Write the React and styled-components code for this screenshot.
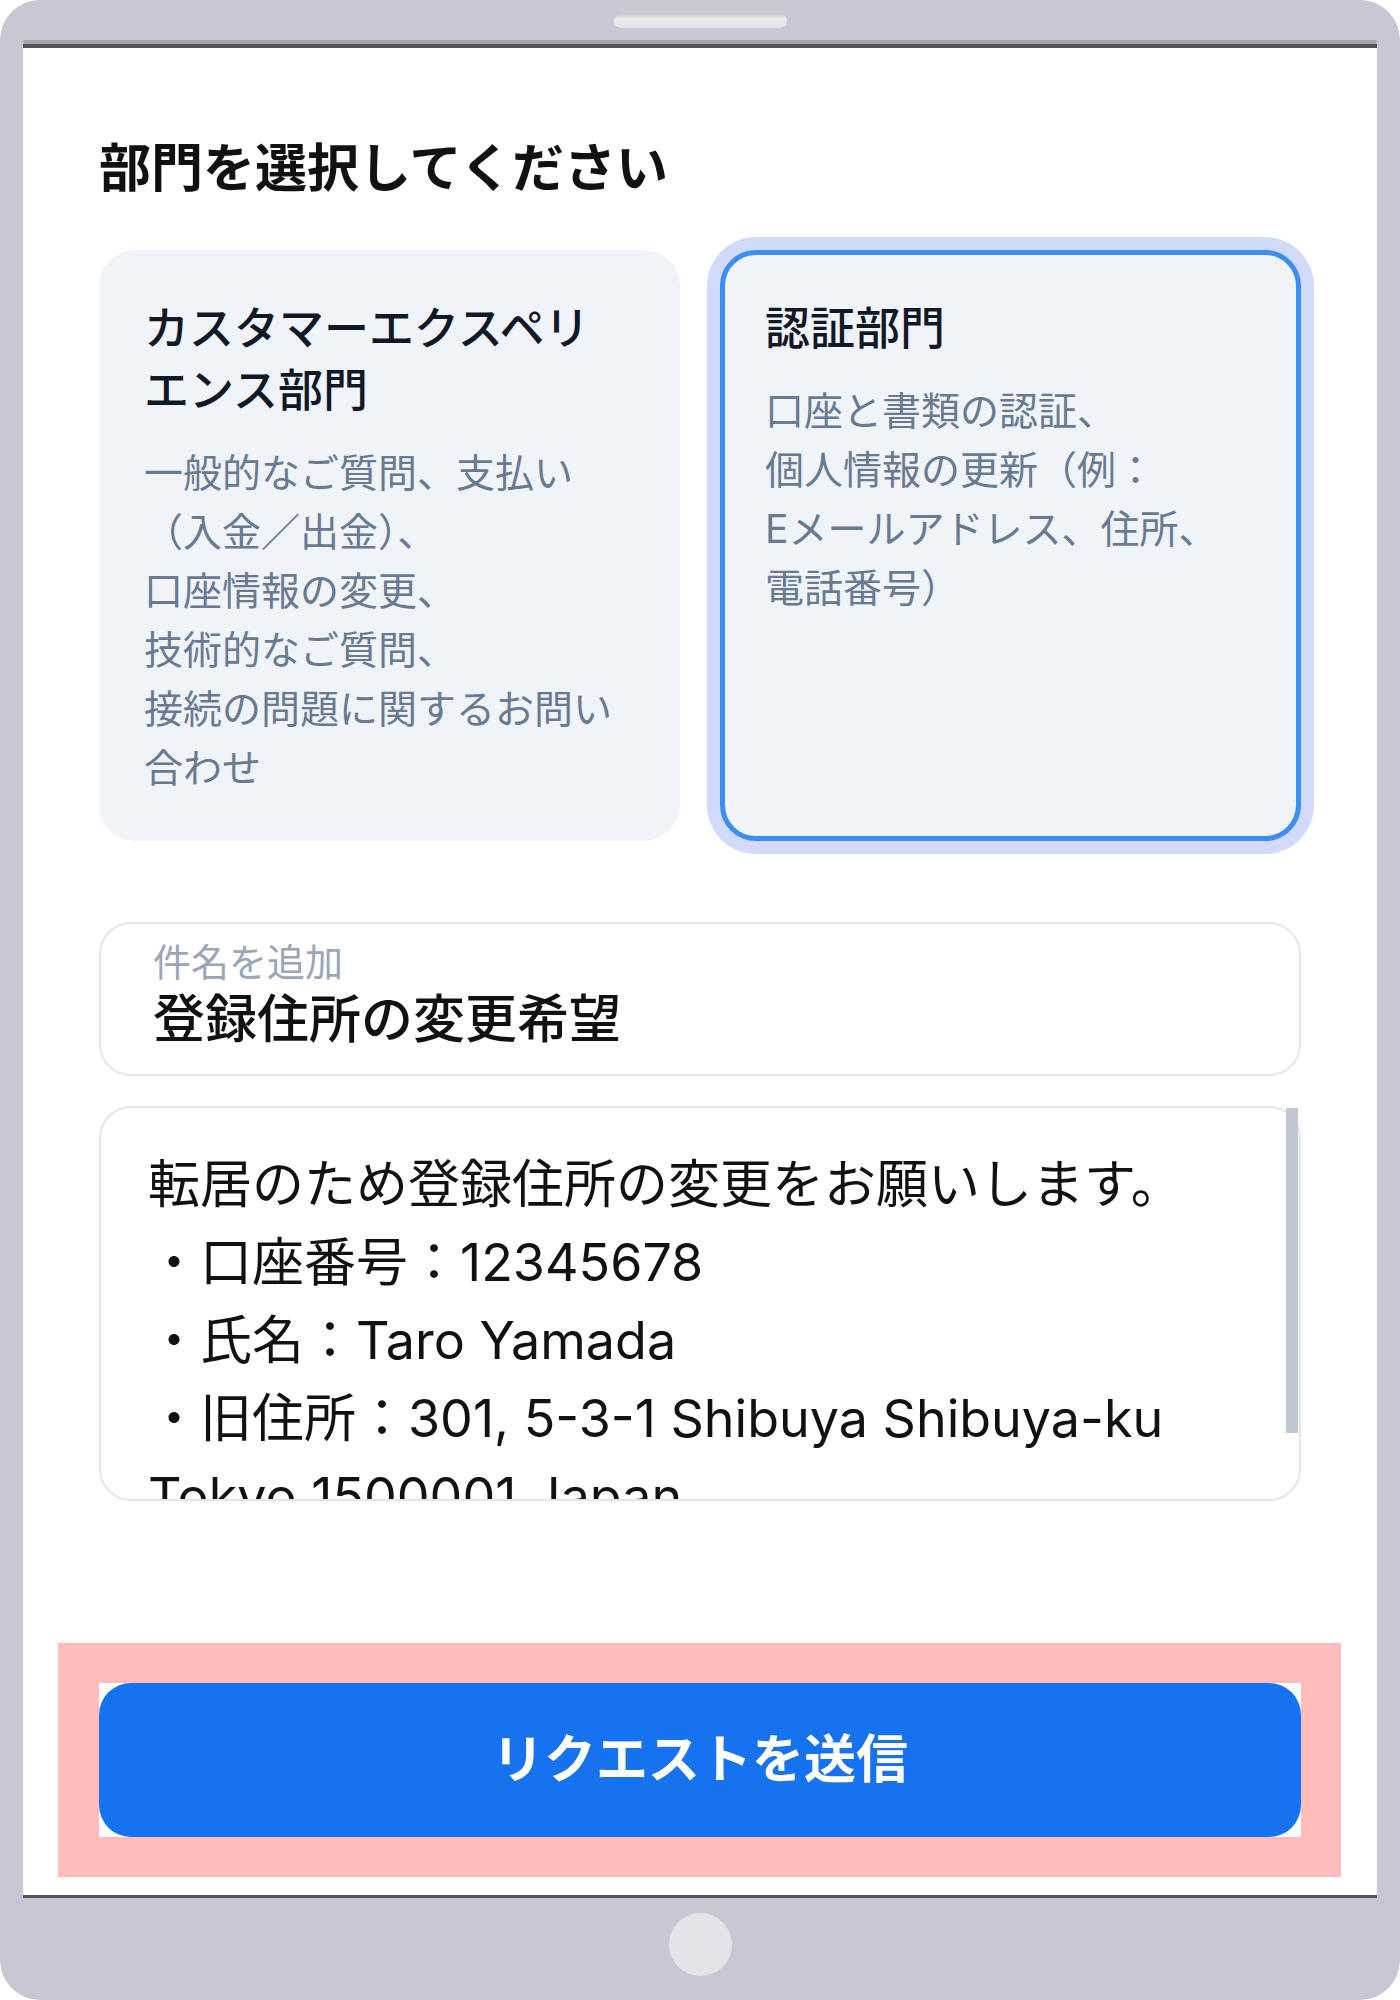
import React from 'react';
import styled, { createGlobalStyle } from 'styled-components';

const GlobalStyle = createGlobalStyle`
  * { box-sizing: border-box; }
  html, body { margin: 0; padding: 0; background: #ffffff; }
  body {
    font-family: 'Inter', 'Noto Sans CJK JP', sans-serif;
    -webkit-font-smoothing: antialiased;
  }
`;

const message = `転居のため登録住所の変更をお願いします。
・口座番号：12345678
・氏名：Taro Yamada
・旧住所：301, 5-3-1 Shibuya Shibuya-ku
Tokyo 1500001 Japan`;

const App = () => {
  return (
    <>
      <GlobalStyle />
      <Frame>
        <TopBezel>
          <Speaker />
        </TopBezel>
        <Screen>
          <Heading>部門を選択してください</Heading>
          <CardGrid>
            <Card>
              <CardTitle>カスタマーエクスペリエンス部門</CardTitle>
              <CardText>
                一般的なご質問、支払い（入金／出金）、<br />
                口座情報の変更、<br />
                技術的なご質問、<br />
                接続の問題に関するお問い合わせ
              </CardText>
            </Card>
            <Card $selected>
              <CardTitle>認証部門</CardTitle>
              <CardText>
                口座と書類の認証、<br />
                個人情報の更新（例：<br />
                Eメールアドレス、住所、<br />
                電話番号）
              </CardText>
            </Card>
          </CardGrid>
          <SubjectField>
            <FieldLabel>件名を追加</FieldLabel>
            <SubjectInput readOnly value="登録住所の変更希望" />
          </SubjectField>
          <MessageWrap>
            <MessageBox readOnly value={message} />
            <ScrollThumb />
          </MessageWrap>
          <Footer>
            <FooterInner>
              <SubmitButton type="button">リクエストを送信</SubmitButton>
            </FooterInner>
          </Footer>
        </Screen>
        <BottomBezel>
          <HomeButton />
        </BottomBezel>
      </Frame>
    </>
  );
};

export default App;

const Frame = styled.div`
width: 1400px;
height: 2000px;
background: #c8c8d4;
border-radius: 40px;
overflow: hidden;
display: flex;
flex-direction: column;
align-items: center;
`;

const TopBezel = styled.div`
height: 44px;
width: 100%;
display: flex;
justify-content: center;
padding-top: 14px;
`;

const Speaker = styled.div`
width: 173px;
height: 14px;
border-radius: 7px;
background: linear-gradient(#c9c9cc 0%, #ececec 35%, #e2e2e4 100%);
`;

const Screen = styled.div`
width: 1354px;
height: 1854px;
background: #ffffff;
border-top: 4px solid #555558;
border-bottom: 3px solid #555558;
box-shadow: 0 -4px 0 #a9a9b1;
display: flex;
flex-direction: column;
padding: 87px 76px 18px 76px;
`;

const Heading = styled.h1`
margin: 0;
font-size: 52px;
line-height: 68px;
font-weight: 700;
color: #111111;
`;

const CardGrid = styled.div`
margin-top: 47px;
display: grid;
grid-template-columns: 1fr 1fr;
gap: 40px;
`;

const Card = styled.div`
background: #f0f4f9;
border: 5px solid ${p => (p.$selected ? '#3a8ef6' : 'transparent')};
box-shadow: ${p => (p.$selected ? '0 0 0 13px #d1dafa' : 'none')};
border-radius: 36px;
padding: 43px 45px 39px 40px;
`;

const CardTitle = styled.h2`
margin: 0;
font-size: 45px;
line-height: 62px;
font-weight: 500;
color: #111827;
`;

const CardText = styled.p`
margin: 21px 0 0;
font-size: 39px;
line-height: 59px;
font-weight: 400;
color: #687a92;
`;

const SubjectField = styled.label`
margin-top: 81px;
display: flex;
flex-direction: column;
border: 2px solid #e2e7ef;
border-radius: 32px;
padding: 15px 40px 23px 52px;
background: #ffffff;
`;

const FieldLabel = styled.span`
font-size: 38px;
line-height: 46px;
color: #9aa5b8;
`;

const SubjectInput = styled.input`
border: none;
outline: none;
padding: 0;
margin: 4px 0 0;
height: 62px;
font-family: 'Inter', 'Noto Sans CJK JP', sans-serif;
font-size: 52px;
line-height: 62px;
font-weight: 500;
color: #111111;
background: transparent;
`;

const MessageWrap = styled.div`
position: relative;
margin-top: 30px;
`;

const MessageBox = styled.textarea`
display: block;
height: 395px;
width: 100%;
border: 2px solid #e2e7ef;
border-radius: 32px;
padding: 38px 30px 42px 47px;
font-family: 'Inter', 'Noto Sans CJK JP', sans-serif;
font-size: 52px;
line-height: 78px;
color: #111111;
resize: none;
outline: none;
overflow: hidden;
background: #ffffff;
`;

const ScrollThumb = styled.div`
position: absolute;
top: 2px;
right: 3px;
width: 12px;
height: 325px;
background: #c0c7d3;
`;

const Footer = styled.div`
margin: auto -40px 0 -41px;
padding: 40px 40px 40px 41px;
background: #ffbcbc;
`;

const FooterInner = styled.div`
background: #ffffff;
`;

const SubmitButton = styled.button`
display: block;
width: 100%;
height: 154px;
border: none;
border-radius: 32px;
padding: 0 0 10px;
background: #1672ee;
color: #ffffff;
font-family: 'Inter', 'Noto Sans CJK JP', sans-serif;
font-size: 52px;
font-weight: 700;
cursor: pointer;
`;

const BottomBezel = styled.div`
flex: 1;
width: 100%;
display: flex;
justify-content: center;
padding-top: 15px;
`;

const HomeButton = styled.div`
width: 63px;
height: 63px;
border-radius: 50%;
background: #e3e4ea;
`;
